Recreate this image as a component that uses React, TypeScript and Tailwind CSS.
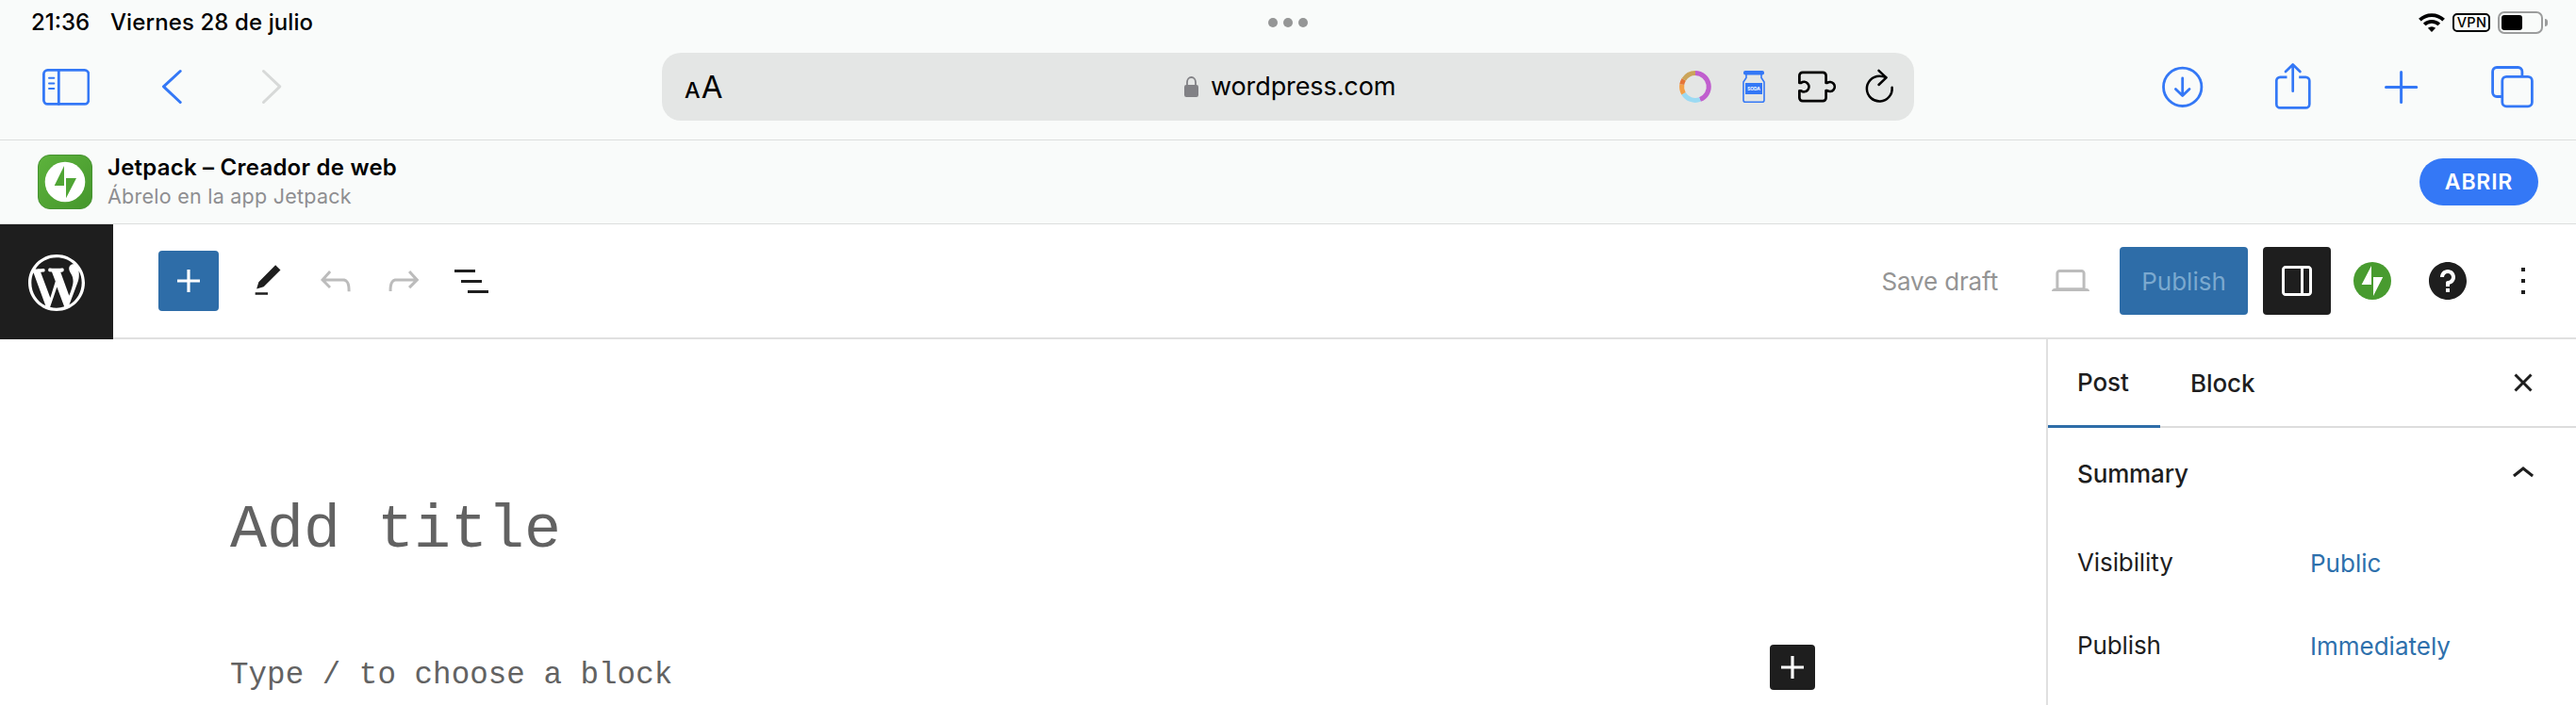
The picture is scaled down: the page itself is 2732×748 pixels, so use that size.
import React from 'react';

const summaryRows = [
  { label: 'Visibility', value: 'Public' },
  { label: 'Publish', value: 'Immediately' },
];

interface GlyphProps {
  d: string;
  className?: string;
}

// 24-unit editor glyph, filled with the current text colour
const Glyph: React.FC<GlyphProps> = ({ d, className = 'w-12 h-12' }) => (
  <svg viewBox="0 0 24 24" className={`shrink-0 ${className}`} fill="currentColor">
    <path d={d} />
  </svg>
);

const PLUS = 'M18 11.2h-5.2V6h-1.6v5.2H6v1.6h5.2V18h1.6v-5.2H18z';
const PENCIL = 'M20.1 5.1L16.9 2 6.2 12.7l-1.3 4.4 4.5-1.3L20.1 5.1zM4 20.8h8v-1.5H4v1.5z';
const UNDO =
  'M18.3 11.7c-.6-.6-1.4-.9-2.3-.9H6.7l2.9-3.3-1.1-1-4.5 5L8.5 16l1-1-2.7-2.7H16c.5 0 .9.2 1.3.5 1 1 1 3.4 1 4.5v.3h1.5v-.2c0-1.5 0-4.3-1.5-5.7z';
const REDO =
  'M15.6 6.5l-1.1 1 2.9 3.3H8c-.9 0-1.7.3-2.3.9-1.4 1.5-1.4 4.2-1.4 5.6v.2h1.5v-.3c0-1.1 0-3.5 1-4.5.3-.3.7-.5 1.3-.5h9.2L14.5 15l1.1 1.1 4.6-4.6-4.6-5z';
const LIST_VIEW = 'M3 6h11v1.5H3V6zm3.5 5.5h11V13h-11v-1.5zM21 17H10v1.5h11V17z';
const LAPTOP =
  'M20.5 16h-.7V8c0-1.1-.9-2-2-2H6.2c-1.1 0-2 .9-2 2v8h-.7c-.8 0-1.5.7-1.5 1.5h20c0-.8-.7-1.5-1.5-1.5zM5.7 8c0-.3.2-.5.5-.5h11.6c.3 0 .5.2.5.5v7.6H5.7V8z';
const DRAWER =
  'M18 4H6c-1.1 0-2 .9-2 2v12c0 1.1.9 2 2 2h12c1.1 0 2-.9 2-2V6c0-1.1-.9-2-2-2zm-4 14.5H6c-.3 0-.5-.2-.5-.5V6c0-.3.2-.5.5-.5h8v13zm4.5-.5c0 .3-.2.5-.5.5h-2.5v-13H18c.3 0 .5.2.5.5v12z';
const HELP =
  'M12 2C6.477 2 2 6.477 2 12s4.477 10 10 10 10-4.477 10-10S17.523 2 12 2zm1 16h-2v-2h2v2zm0-4.141V15h-2v-2c0-.552.448-1 1-1 1.103 0 2-.897 2-2s-.897-2-2-2-2 .897-2 2H8c0-2.206 1.794-4 4-4s4 1.794 4 4c0 1.86-1.277 3.429-3 3.859z';
const MORE = 'M13 19h-2v-2h2v2zm0-6h-2v-2h2v2zm0-6h-2V5h2v2z';
const CLOSE =
  'M12 13.06l3.712 3.713 1.061-1.06L13.061 12l3.712-3.712-1.06-1.06L12 10.938 8.288 7.227l-1.061 1.06L10.939 12l-3.712 3.712 1.06 1.061L12 13.061z';
const CHEVRON_UP = 'M6.5 12.4L12 8l5.5 4.4-.9 1.2L12 10l-4.5 3.6-1-1.2z';
const WORDPRESS =
  'M20 10c0-5.51-4.49-10-10-10C4.48 0 0 4.49 0 10c0 5.52 4.48 10 10 10 5.51 0 10-4.48 10-10zM7.78 15.37L4.37 6.22c.55-.02 1.17-.08 1.17-.08.5-.06.44-1.13-.06-1.11 0 0-1.45.11-2.37.11-.18 0-.37 0-.58-.01C4.12 2.69 6.87 1.11 10 1.11c2.33 0 4.45.87 6.05 2.34-.68-.11-1.65.39-1.65 1.58 0 .74.45 1.36.9 2.1.35.61.55 1.36.55 2.46 0 1.49-1.4 5-1.4 5l-3.03-8.37c.54-.02.82-.17.82-.17.5-.05.44-1.25-.06-1.22 0 0-1.44.12-2.38.12-.87 0-2.33-.12-2.33-.12-.5-.03-.56 1.2-.06 1.22l.92.08 1.26 3.41zM17.41 10c.24-.64.74-1.87.43-4.25.7 1.29 1.05 2.71 1.05 4.25 0 3.29-1.73 6.24-4.4 7.78.97-2.59 1.94-5.2 2.92-7.78zM6.1 18.09C3.12 16.65 1.11 13.53 1.11 10c0-1.3.23-2.48.72-3.59C3.25 10.3 4.67 14.2 6.1 18.09zm4.03-6.63l2.58 6.98c-.86.29-1.76.45-2.71.45-.79 0-1.57-.11-2.29-.33.81-2.38 1.62-4.74 2.42-7.1z';

const StatusBar: React.FC = () => (
  <div className="flex h-12 items-center text-2xl font-medium text-black">
    <div className="flex w-[1345px] pl-[33px]">
      <span className="w-[84px]">21:36</span>
      <span className="tracking-[0.1px]">Viernes 28 de julio</span>
    </div>
    <div className="flex gap-1.5">
      <span className="h-2.5 w-2.5 rounded-full bg-[#959696]" />
      <span className="h-2.5 w-2.5 rounded-full bg-[#959696]" />
      <span className="h-2.5 w-2.5 rounded-full bg-[#959696]" />
    </div>
    <div className="ml-auto flex items-center pr-[30px]">
      <svg width="28" height="20" viewBox="0 0 28 20" fill="none" stroke="#000" strokeWidth="3.8">
        <path d="M1.4 7.2a18 18 0 0 1 25.2 0" />
        <path d="M6.2 12a11.2 11.2 0 0 1 15.6 0" />
        <path d="M14 20l-4.1-4.2a6 6 0 0 1 8.2 0z" fill="#000" stroke="none" />
      </svg>
      <span className="ml-2 flex h-5 w-10 items-center justify-center rounded-[5px] border-2 border-black pl-px text-[14.5px] leading-none tracking-[0.3px]">
        VPN
      </span>
      <span className="ml-2 flex h-6 w-12 items-center rounded-[7px] border-2 border-[#9b9c9c] pl-0.5">
        <span className="h-4 w-[22px] rounded-[3px] bg-black" />
      </span>
      <span className="ml-0.5 h-2 w-[3px] rounded-r-full bg-[#9b9c9c]" />
    </div>
  </div>
);

const AddressBar: React.FC = () => (
  <div className="ml-[403px] flex h-[72px] w-[1328px] items-center rounded-[20px] bg-[#e4e6e5]">
    <div className="flex w-[554px] items-baseline pl-6 pt-1 text-black">
      <span className="text-[23.5px] leading-[36px] font-medium">A</span>
      <span className="ml-px text-[33px] leading-[36px]">A</span>
    </div>
    <svg width="15" height="22" viewBox="0 0 15 22">
      <path d="M3 10V6.2a4.5 5.2 0 0 1 9 0V10" fill="none" stroke="#818185" strokeWidth="1.8" />
      <rect y="9" width="15" height="13" rx="2.2" fill="#818185" />
    </svg>
    <span className="ml-[13px] text-[27px] tracking-[-0.1px] text-black">wordpress.com</span>
    <div className="ml-auto flex items-center pr-[20px]">
      <svg width="36" height="36" viewBox="-18 -18 36 36" fill="none" strokeWidth="5">
        <path d="M0 -14.4A14.4 14.4 0 0 1 4.9 13.5" stroke="#c05fce" />
        <path d="M4.9 13.5A14.4 14.4 0 0 1 -12.5 7.2" stroke="#9bdaf3" />
        <path d="M-12.5 7.2A14.4 14.4 0 0 1 -14.2 -2.5" stroke="#f3a049" />
        <path d="M-14.2 -2.5A14.4 14.4 0 0 1 -12.2 -7.6" stroke="#e57538" />
        <path d="M-12.2 -7.6A14.4 14.4 0 0 1 0 -14.4" stroke="#cba45a" />
      </svg>
      <svg className="ml-8" width="24" height="34" viewBox="0 0 24 34">
        <rect x="1" width="22" height="4.5" rx="2" fill="#3478f6" />
        <path d="M4 4v3.5L1 12v19.2a2 2 0 0 0 2 2h18a2 2 0 0 0 2-2V12l-3-4.5V4" fill="none" stroke="#3478f6" strokeWidth="1.6" />
        <rect x="3" y="13" width="18" height="12" fill="#3478f6" />
        <text x="12" y="20.8" textAnchor="middle" fontSize="4.8" fontWeight="700" fill="#fff">SODA</text>
      </svg>
      <svg className="ml-[35px]" width="41" height="34" viewBox="0 0 41 34" fill="none" stroke="#000" strokeWidth="2.7" strokeLinejoin="round">
        <path d="M1.4 12.5V5.2a3.4 3.4 0 0 1 3.4-3.4h21.4a3.4 3.4 0 0 1 3.4 3.4v7.7h1.3a5 5 0 1 1 0 8.2h-1.3v7.7a3.4 3.4 0 0 1-3.4 3.4H4.8a3.4 3.4 0 0 1-3.4-3.4v-7.5h1.8a5.2 5.2 0 1 0 0-8.4H1.4z" />
      </svg>
      <svg className="ml-[29px]" width="33" height="38" viewBox="0 0 33 38" fill="none" stroke="#000" strokeWidth="2.5" strokeLinecap="round" strokeLinejoin="round">
        <path d="M29.6 19.8A13.4 13.4 0 1 1 16.2 7.7c2.700 0 5 .5 7 1.500" />
        <path d="M15.500 1.800l8 7.600-8 7.600" />
      </svg>
    </div>
  </div>
);

const BrowserToolbar: React.FC = () => (
  <div className="flex h-[88px] items-center pl-[45px] text-[#3478f6]">
    <svg width="50" height="40" viewBox="0 0 50 40" fill="none" stroke="currentColor" strokeWidth="2.8" strokeLinecap="round">
      <rect x="1.4" y="2.4" width="47.5" height="36" rx="4.2" />
      <path d="M17.3 2.4v36" />
      <path d="M7 10.7h5.3M7 16.4h5.3M7 22h5.3" strokeWidth="2" />
    </svg>
    <svg className="ml-[76px]" width="22" height="38" viewBox="0 0 22 38" fill="none" stroke="currentColor" strokeWidth="3" strokeLinecap="round" strokeLinejoin="round">
      <path d="M20.2 2.5L2.5 18.8l17.7 16.7" />
    </svg>
    <svg className="ml-[84px]" width="22" height="38" viewBox="0 0 22 38" fill="none" stroke="#d7d9d8" strokeWidth="3" strokeLinecap="round" strokeLinejoin="round">
      <path d="M2.5 2.5l17.3 16.3L2.5 35.5" />
    </svg>

    <AddressBar />

    <svg className="ml-[263px]" width="44" height="44" viewBox="0 0 44 44" fill="none" stroke="currentColor" strokeWidth="2.8" strokeLinecap="round" strokeLinejoin="round">
      <circle cx="21.7" cy="22.3" r="20.2" />
      <path d="M21.7 13v18.3M14.4 24.4l7.3 7 7.3-7" />
    </svg>
    <svg className="ml-[73px]" width="44" height="52" viewBox="0 0 44 52" fill="none" stroke="currentColor" strokeWidth="2.7" strokeLinejoin="round">
      <path d="M15.5 15.8H8.3a4 4 0 0 0-4 4v24.6a4 4 0 0 0 4 4h27a4 4 0 0 0 4-4V19.8a4 4 0 0 0-4-4h-7.1" />
      <path d="M21.7 2.5v28.2M14 10l7.7-7.5 7.7 7.5" strokeLinecap="round" />
    </svg>
    <svg className="ml-[71px]" width="44" height="44" viewBox="0 0 44 44" fill="none" stroke="currentColor" strokeWidth="3" strokeLinecap="round">
      <path d="M5.5 22.5h32.3M21.6 6.5v32" />
    </svg>
    <svg className="ml-[71px]" width="50" height="48" viewBox="0 0 50 48" fill="none" stroke="currentColor" strokeWidth="2.8">
      <path d="M13.5 34.5H8a4.4 4.4 0 0 1-4.4-4.400V8A4.400 4.400 0 0 1 8 3.500h22.500A4.400 4.400 0 0 1 34.900 8v5" />
      <rect x="13.8" y="13.3" width="31.6" height="31.6" rx="4.4" />
    </svg>
  </div>
);

const AppBanner: React.FC = () => (
  <div className="flex h-[90px] items-center border-y border-[#dcdedd] px-10">
    <svg width="58" height="58" viewBox="0 0 58 58">
      <defs>
        <linearGradient id="jp" x1="0" y1="0" x2="1" y2="1">
          <stop offset="0" stopColor="#5db33c" />
          <stop offset="1" stopColor="#45962c" />
        </linearGradient>
      </defs>
      <rect x=".5" y=".5" width="57" height="57" rx="12.5" fill="url(#jp)" stroke="#459230" />
      <circle cx="29" cy="29" r="21.3" fill="#fff" />
      <path d="M28 12v21H17.7zM30 25h11L30 46.3z" fill="#50a535" />
    </svg>
    <div className="ml-4">
      <p className="text-2xl leading-[30px] font-semibold tracking-[0.23px] text-black">Jetpack – Creador de web</p>
      <p className="text-[21.5px] leading-[30px] tracking-[0.25px] text-[#8e8e91]">Ábrelo en la app Jetpack</p>
    </div>
    <button className="ml-auto h-[50px] w-[126px] rounded-full bg-[#3478f6] text-[23px] font-semibold tracking-[0.8px] text-white">
      ABRIR
    </button>
  </div>
);

const EditorHeader: React.FC = () => (
  <header className="flex h-[122px] bg-white">
    <div className="flex w-[120px] items-center justify-center bg-[#1e1e1e] pt-0.5 text-white">
      <svg viewBox="-2 -2 24 24" className="h-[72px] w-[72px]" fill="currentColor">
        <path d={WORDPRESS} />
      </svg>
    </div>
    <div className="flex flex-1 items-center border-b-2 border-[#e0e0e0] pl-12 pr-8 text-[#1e1e1e]">
      <button className="flex h-16 w-16 items-center justify-center rounded-[4px] bg-[#2e6da8] text-white">
        <Glyph d={PLUS} />
      </button>
      <button className="ml-4 flex w-[72px] justify-center">
        <Glyph d={PENCIL} className="h-10 w-10" />
      </button>
      <button className="flex w-[72px] justify-center text-[#bcbcbc]">
        <Glyph d={UNDO} />
      </button>
      <button className="flex w-[72px] justify-center text-[#bcbcbc]">
        <Glyph d={REDO} />
      </button>
      <button className="flex w-[72px] justify-center">
        <Glyph d={LIST_VIEW} />
      </button>

      <span className="ml-auto text-[26px] tracking-[-0.15px] text-[#949494]">Save draft</span>
      <Glyph d={LAPTOP} className="ml-[53px] h-12 w-12 text-[#bcbcbc]" />
      <button className="ml-7 h-[72px] w-[136px] rounded-[4px] bg-[#2e6da8] text-[26px] text-[#7ba9cf]">
        Publish
      </button>
      <button className="ml-4 flex h-[72px] w-[72px] items-center justify-center rounded-[4px] bg-[#1e1e1e] text-white">
        <Glyph d={DRAWER} />
      </button>
      <svg viewBox="0 0 24 24" className="ml-5 h-12 w-12">
        <circle cx="12" cy="12" r="10" fill="#489b2f" />
        <path d="M11.5 4v10H6.3zM12.5 10h5.1l-5.1 10z" fill="#fff" />
      </svg>
      <Glyph d={HELP} className="ml-8 h-12 w-12" />
      <Glyph d={MORE} className="ml-8 h-12 w-12" />
    </div>
  </header>
);

const Canvas: React.FC = () => (
  <main className="flex-1 bg-white pl-[244px] pt-[163px] font-['Liberation_Mono',monospace] text-[#626262]">
    <h1 className="text-[65px] leading-[80px]">Add title</h1>
    <div className="mt-[81px] flex h-12 w-[1681px] justify-between">
      <p className="pt-[9px] text-[32.5px] leading-[48px] tracking-[0.05px]">Type / to choose a block</p>
      <button className="flex h-12 w-12 items-center justify-center rounded-[4px] bg-[#1e1e1e] text-white">
        <Glyph d={PLUS} />
      </button>
    </div>
  </main>
);

const SettingsSidebar: React.FC = () => (
  <aside className="w-[562px] border-l-2 border-[#e0e0e0] bg-white text-[26px] text-[#1e1e1e]">
    <div className="flex h-[94px] font-medium tracking-[-0.1px]">
      <button className="w-[119px] border-b-3 border-[#2e6da8] pl-[31px] text-left">Post</button>
      <div className="flex flex-1 items-center justify-between border-b-2 border-[#dddddd] pl-8 pr-8">
        <span>Block</span>
        <Glyph d={CLOSE} />
      </div>
    </div>
    <div className="flex h-[98px] items-center justify-between pl-[31px] pr-8 font-medium tracking-[-0.15px]">
      <span className="pb-0.5">Summary</span>
      <Glyph d={CHEVRON_UP} />
    </div>
    {summaryRows.map((row) => (
      <div key={row.label} className="flex h-[88px] items-center pl-[31px] pt-px">
        <span className="w-[247px] tracking-[-0.1px]">{row.label}</span>
        <span className="pt-0.5 text-[#2e70ac]">{row.value}</span>
      </div>
    ))}
  </aside>
);

const App: React.FC = () => {
  return (
    <div className="flex h-[748px] w-[2732px] flex-col overflow-hidden bg-[#f9fbfa] font-['Inter','Liberation_Sans',sans-serif]">
      <StatusBar />
      <BrowserToolbar />
      <div className="h-3" />
      <AppBanner />
      <EditorHeader />
      <div className="flex flex-1">
        <Canvas />
        <SettingsSidebar />
      </div>
    </div>
  );
};

export default App;
